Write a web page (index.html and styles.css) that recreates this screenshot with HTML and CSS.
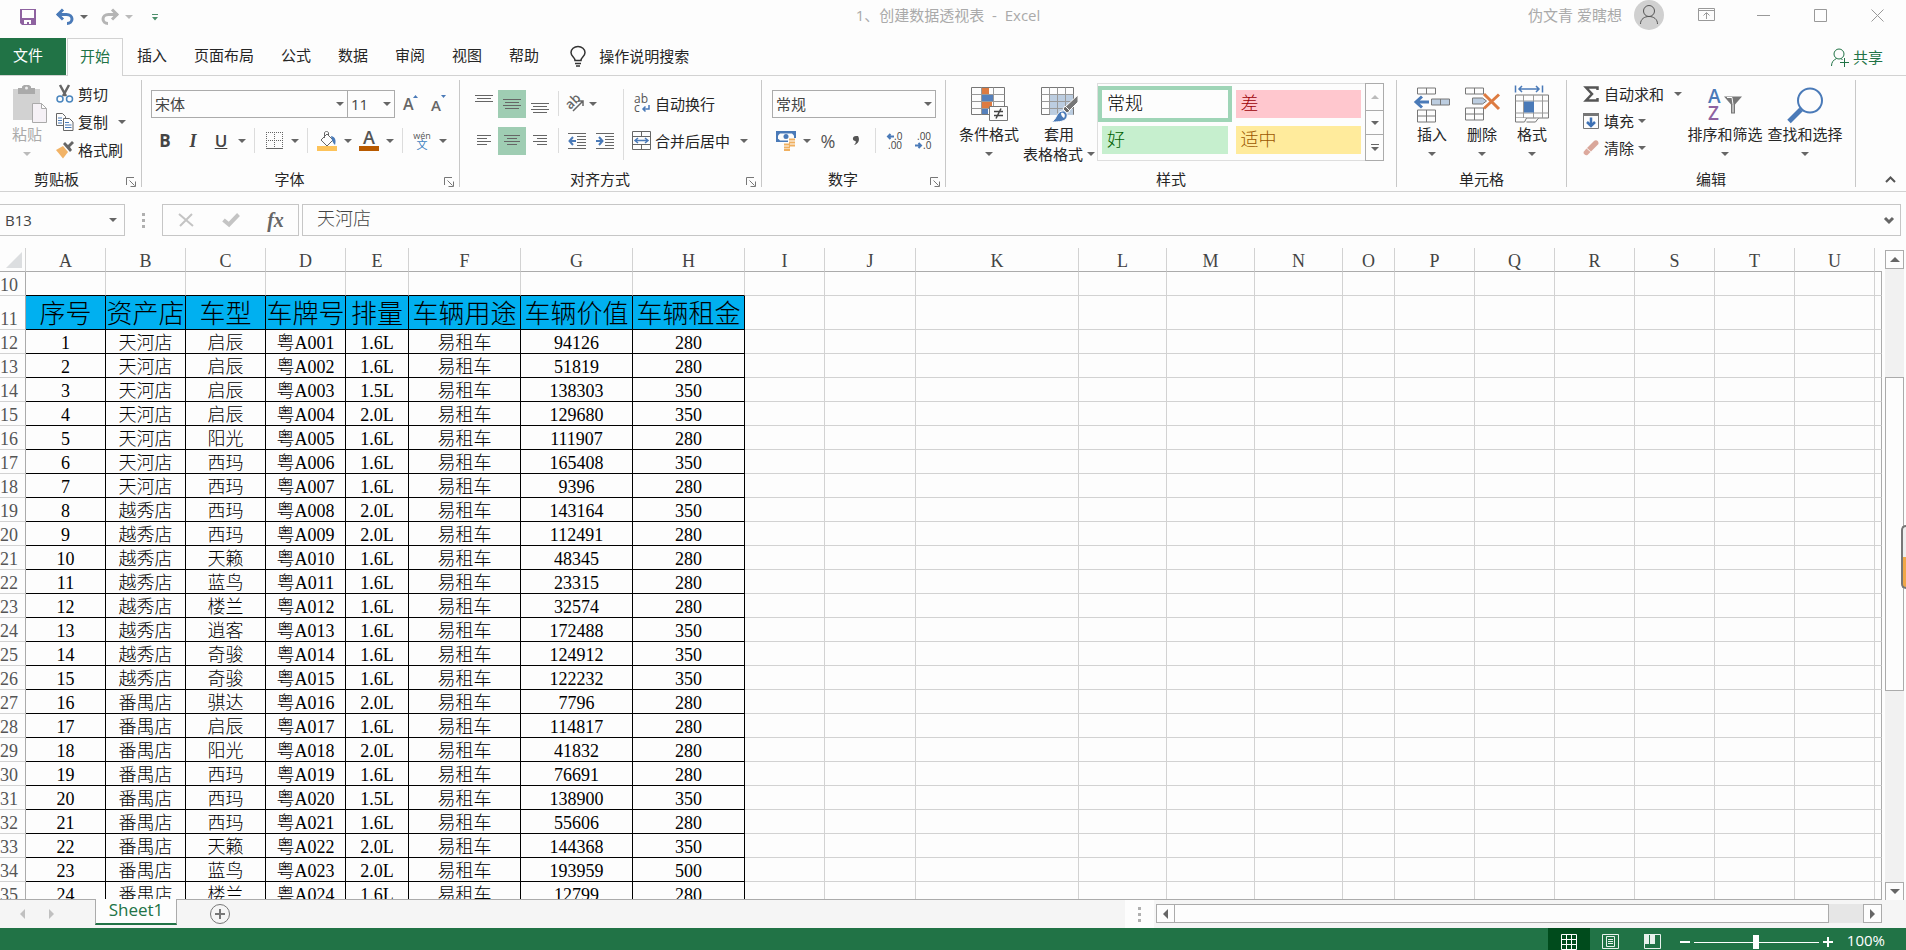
FILE: index.html
```
<!DOCTYPE html>
<html lang="zh-CN">
  <head>
    <meta charset="utf-8">
    <meta name="viewport" content="width=device-width, initial-scale=1">
    <title>1、创建数据透视表 - Excel</title>
    <link rel="stylesheet" href="styles.css">
  </head>
  <body>
    <header class="titlebar">
      <div class="quick">
        <button class="save" aria-label="保存"><svg width="16" height="16" viewBox="0 0 16 16"><path d="M0 0h16v16H2l-2-2z" fill="#8e62a0"/><path d="M2 1h12v8H2z" fill="#fdfdfd"/><path d="M4 11h7v4H9v-2H7v2H4z" fill="#fdfdfd"/></svg></button>
        <button class="undo" aria-label="撤消"><svg width="18" height="16" viewBox="0 0 18 16" fill="none" stroke="#4a7ab8" stroke-width="3"><path d="M1 5.500h9.500c3.500 0 5.500 2 5.500 4.500s-2 4.500-5 4.500" /><path d="M7 0.500l-5 5 5 5"/></svg></button>
        <button class="drop" aria-label="撤消列表"><span class="caret"></span></button>
        <button class="undo" aria-label="恢复"><svg width="18" height="16" viewBox="0 0 18 16" fill="none" stroke="#b5b5b5" stroke-width="3"><path d="M17 5.500H7.500C4 5.500 2 7.500 2 10s2 4.500 5 4.500"/><path d="M11 0.500l5 5-5 5"/></svg></button>
        <button class="drop" aria-label="恢复列表"><span class="caret pale"></span></button>
        <button class="custom" aria-label="自定义快速访问工具栏"><svg width="6" height="7" viewBox="0 0 6 7" fill="#4d8f6c"><path d="M0 0h6v1H0zM0 3h6L3 6.500z"/></svg></button>
      </div>
      <h1>1、创建数据透视表&nbsp; -&nbsp; Excel</h1>
      <div class="account">
        <span>伪文青 爱瞎想</span>
        <button class="avatar" aria-label="帐户"><svg width="30" height="30" viewBox="0 0 30 30" fill="none" stroke="#555"><circle cx="15" cy="15" r="15" fill="#d0d0d0" stroke="none"/><circle cx="15" cy="11" r="5.500"/><path d="M6.500 24c0-5 4-7.500 8.500-7.500s8.500 2.500 8.500 7.500"/></svg></button>
        <button class="win" aria-label="功能区显示选项"><svg width="17" height="14" viewBox="0 0 17 14" fill="none" stroke="#999"><path d="M.5.500h16v12H.5zM.5 2.500h16M8.500 11V5M5.500 7.500l3-3 3 3"/></svg></button>
        <button class="win" aria-label="最小化"><svg width="13" height="13" viewBox="0 0 13 13" stroke="#999"><path d="M0 6.500h13"/></svg></button>
        <button class="win" aria-label="最大化"><svg width="13" height="13" viewBox="0 0 13 13" fill="none" stroke="#999"><path d="M.5.500h12v12H.5z"/></svg></button>
        <button class="win" aria-label="关闭"><svg width="13" height="13" viewBox="0 0 13 13" stroke="#999"><path d="M.5.500l12 12M12.500.500l-12 12"/></svg></button>
      </div>
    </header>

    <nav class="tabs">
      <button class="file">文件</button>
      <button class="active">开始</button>
      <button>插入</button>
      <button>页面布局</button>
      <button>公式</button>
      <button>数据</button>
      <button>审阅</button>
      <button>视图</button>
      <button>帮助</button>
      <button class="tell"><svg width="16" height="21" viewBox="0 0 16 21" fill="none" stroke="#333" stroke-width="1.500"><path d="M5 14.500c0-3-4-4-4-8a7 6 0 0 1 14 0c0 4-4 5-4 8zM5 17.500h6M6 20h4"/></svg>操作说明搜索</button>
      <button class="share"><svg width="18" height="19" viewBox="0 0 18 19" fill="none" stroke="#217346"><circle cx="8" cy="6" r="5"/><path d="M.5 18c0-4 2-6 5-7.500M10 10.500l1.500 1.500M13.500 10v9M9 14.500h9"/></svg>共享</button>
    </nav>

    <section class="ribbon">
      <div class="group clipboard">
        <div class="tools">
          <button class="big paste"><svg width="34" height="39" viewBox="0 0 34 39"><path d="M0 4h27v31H0z" fill="#d2d2d2"/><path d="M5 3h4V1.500L11 0h5l2 1.500V3h4v6H5z" fill="#aaa"/><circle cx="13.500" cy="3" r="1.500" fill="#eee"/><path d="M19.500 18.500h9l5 5v14h-14zM28.500 18.500v5h5" fill="#f5f1f6" stroke="#aaa"/></svg>粘贴<span class="caret pale"></span></button>
          <div class="stack">
            <button><svg width="18" height="18" viewBox="0 0 18 18" fill="none"><path d="M4 0l6 11M13 0L7 11" stroke="#666" stroke-width="2.500"/><circle cx="4" cy="14" r="3" stroke="#4a86be" stroke-width="1.500"/><circle cx="13.500" cy="14" r="3" stroke="#4a86be" stroke-width="1.500"/></svg>剪切</button>
            <button><svg width="18" height="18" viewBox="0 0 18 18" fill="#fdfdfd" stroke="#666"><path d="M.5.500h6l3 3v9h-9z"/><path d="M2 5h4M2 7.500h4M2 10h4" stroke="#4a7ab8"/><path d="M7.500 5.500h6l3.500 3.500v8.500H7.500z"/><path d="M9 9.500h4M9 12h6.500M9 14.500h6.500" stroke="#4a7ab8"/></svg>复制<span class="caret far"></span></button>
            <button><svg width="18" height="18" viewBox="0 0 18 18"><path d="M0 9l7-4 5 6-5 6.500z" fill="#f2b366"/><path d="M7 3l2-2 3 3 4-4 2 2-4 4 2 3-2 2z" fill="#666"/></svg>格式刷</button>
          </div>
        </div>
        <footer><span>剪贴板</span><button class="launch" aria-label="剪贴板设置"><svg width="10" height="10" viewBox="0 0 10 10" fill="none" stroke="#777"><path d="M.5 8V.500H8M3.500 3.500l5 5M9.500 4.500v5h-5"/></svg></button></footer>
      </div>

      <div class="group font">
        <div class="tools">
          <div class="rows">
            <div class="row">
              <label class="combo face"><select aria-label="字体"><option>宋体</option></select><span class="caret"></span></label>
              <label class="combo size"><select aria-label="字号"><option>11</option></select><span class="caret"></span></label>
              <button class="tool" aria-label="增大字号"><svg width="16" height="20" viewBox="0 0 16 20"><text x="0" y="16" font-size="16" font-weight="600" fill="#666">A</text><path d="M10 4l2.500-3L15 4z" fill="#4a7ab8"/></svg></button>
              <button class="tool" aria-label="减小字号"><svg width="16" height="20" viewBox="0 0 16 20"><text x="0" y="17" font-size="15" font-weight="600" fill="#666">A</text><path d="M10 1l2.500 3L15 1z" fill="#4a7ab8"/></svg></button>
            </div>
            <div class="row">
              <button class="tool letter"><b>B</b></button>
              <button class="tool letter"><i>I</i></button>
              <button class="tool letter"><u>U</u></button>
              <button class="drop" aria-label="下划线类型"><span class="caret"></span></button>
              <span class="sep"></span>
              <button class="tool" aria-label="边框"><svg width="17" height="17" viewBox="0 0 17 17" fill="none" stroke="#666"><path d="M0 .500h17M.5 0v16M8.500 0v16M16.500 0v16M0 8.500h17" stroke-dasharray="1 1"/><path d="M0 16.500h17"/></svg></button>
              <button class="drop" aria-label="边框类型"><span class="caret"></span></button>
              <span class="sep"></span>
              <button class="tool" aria-label="填充颜色"><svg width="20" height="20" viewBox="0 0 20 20"><path d="M4 9l6-6 6 6-6 6z" fill="#fdfdfd" stroke="#666"/><path d="M7.500 7V2c0-2 4-2 4 0v3" fill="none" stroke="#666"/><path d="M14 5c5 1 5 5 4 9-2-2-3-4-4-9z" fill="#4a7ab8"/><path d="M0 15h20v5H0z" fill="#fdc35a"/></svg></button>
              <button class="drop" aria-label="选择填充颜色"><span class="caret"></span></button>
              <button class="tool" aria-label="字体颜色"><svg width="20" height="20" viewBox="0 0 20 20"><text x="10" y="13" text-anchor="middle" font-size="18" font-weight="600" fill="#555">A</text><path d="M0 15h20v5H0z" fill="#b85a00"/></svg></button>
              <button class="drop" aria-label="选择字体颜色"><span class="caret"></span></button>
              <span class="sep"></span>
              <button class="tool" aria-label="拼音"><svg width="18" height="20" viewBox="0 0 18 20"><text x="9" y="8" text-anchor="middle" font-size="9" fill="#555">wén</text><text x="9" y="18" text-anchor="middle" font-size="11" fill="#3a7fc0">文</text></svg></button>
              <button class="drop" aria-label="拼音选项"><span class="caret"></span></button>
            </div>
          </div>
        </div>
        <footer><span>字体</span><button class="launch" aria-label="字体设置"><svg width="10" height="10" viewBox="0 0 10 10" fill="none" stroke="#777"><path d="M.5 8V.500H8M3.500 3.500l5 5M9.500 4.500v5h-5"/></svg></button></footer>
      </div>

      <div class="group align">
        <div class="tools">
          <div class="rows">
            <div class="row">
              <button class="tool" aria-label="顶端对齐"><svg width="18" height="20" viewBox="0 0 18 20" stroke="#666"><path d="M0 1.500h18M2 4.500h14M0 7.500h18"/></svg></button>
              <button class="tool on" aria-label="垂直居中"><svg width="18" height="20" viewBox="0 0 18 20" stroke="#666"><path d="M0 5.500h18M2 8.500h14M0 11.500h18M2 14.500h14"/></svg></button>
              <button class="tool" aria-label="底端对齐"><svg width="18" height="20" viewBox="0 0 18 20" stroke="#666"><path d="M0 9.500h18M2 12.500h14M0 15.500h18M2 18.500h14"/></svg></button>
              <span class="sep"></span>
              <button class="tool turn" aria-label="方向"><svg width="20" height="20" viewBox="0 0 20 20"><text x="2" y="14" font-size="13" font-weight="600" fill="#666" transform="rotate(-45 6 11)">ab</text><path d="M8 17L18 7M13 7h5v5" fill="none" stroke="#666" stroke-width="1.500"/></svg><span class="caret"></span></button>
            </div>
            <div class="row">
              <button class="tool" aria-label="左对齐"><svg width="14" height="14" viewBox="0 0 14 14" stroke="#666"><path d="M0 1.500h14M0 4.500h10M0 7.500h14M0 10.500h10"/></svg></button>
              <button class="tool on" aria-label="居中"><svg width="16" height="14" viewBox="0 0 16 14" stroke="#666"><path d="M0 1.500h16M3 4.500h10M0 7.500h16M3 10.500h10"/></svg></button>
              <button class="tool" aria-label="右对齐"><svg width="14" height="14" viewBox="0 0 14 14" stroke="#666"><path d="M0 1.500h14M4 4.500h10M0 7.500h14M4 10.500h10"/></svg></button>
              <span class="sep"></span>
              <button class="tool" aria-label="减少缩进量"><svg width="18" height="16" viewBox="0 0 18 16" fill="none" stroke="#666"><path d="M0 .500h18M9 3.500h9M9 6.500h9M9 9.500h9M9 12.500h9M0 15.500h18"/><path d="M5 4L1.500 8 5 12M1 8h7" stroke="#4a7ab8" stroke-width="2"/></svg></button>
              <button class="tool" aria-label="增加缩进量"><svg width="18" height="16" viewBox="0 0 18 16" fill="none" stroke="#666"><path d="M0 .500h18M9 3.500h9M9 6.500h9M9 9.500h9M9 12.500h9M0 15.500h18"/><path d="M3 4l3.500 4L3 12M0 8h7" stroke="#4a7ab8" stroke-width="2"/></svg></button>
            </div>
          </div>
          <span class="sep tall"></span>
          <div class="rows">
            <div class="row">
              <button class="wide"><svg width="20" height="20" viewBox="0 0 20 20"><text x="2" y="9" font-size="12" fill="#555">ab</text><text x="2" y="18" font-size="12" fill="#555">c</text><path d="M17 11v4h-6M13.500 12.500L11 15l2.500 2.500" fill="none" stroke="#4a7ab8" stroke-width="1.500"/></svg>自动换行</button>
            </div>
            <div class="row">
              <button class="wide"><svg width="20" height="20" viewBox="0 0 20 20" fill="none" stroke="#666"><path d="M.5.500h18v18H.5zM.5 5.500h18M.5 13.500h18M9.500.500v5M9.500 13.500v5"/><path d="M3 9.500h13M6 7L3 9.500 6 12M13 7l3 2.500-3 2.500" stroke="#4a7ab8" stroke-width="1.500"/></svg>合并后居中<span class="caret far"></span></button>
            </div>
          </div>
        </div>
        <footer><span>对齐方式</span><button class="launch" aria-label="对齐设置"><svg width="10" height="10" viewBox="0 0 10 10" fill="none" stroke="#777"><path d="M.5 8V.500H8M3.500 3.500l5 5M9.500 4.500v5h-5"/></svg></button></footer>
      </div>

      <div class="group number">
        <div class="tools">
          <div class="rows">
            <div class="row">
              <label class="combo format"><select aria-label="数字格式"><option>常规</option></select><span class="caret"></span></label>
            </div>
            <div class="row">
              <button class="tool" aria-label="会计数字格式"><svg width="20" height="20" viewBox="0 0 20 20"><path d="M0 0h20v11H0z" fill="#4a7ab8"/><path d="M4 2.500h12l2 2v3l-2 2H4l-2-2v-3z" fill="#fdfdfd"/><circle cx="10" cy="5.500" r="2.500" fill="#4a7ab8"/><path d="M12 7h8v11h-5v2H7v-7h5z" fill="#fdfdfd"/><path d="M13 8.500h6M13 11.500h6M13 14.500h6M8 13.500h6M8 16.500h6M8 19h6" stroke="#f0b060" stroke-width="2"/></svg></button>
              <button class="drop" aria-label="会计格式列表"><span class="caret"></span></button>
              <button class="tool percent">%</button>
              <button class="tool comma" aria-label="千位分隔样式"><svg width="8" height="10" viewBox="0 0 8 10" fill="#555"><path d="M6 0c2 3 1 8-4 9 2-2 2-3 1.500-4C0 5 0 0 4 0z"/></svg></button>
              <span class="sep"></span>
              <button class="tool" aria-label="增加小数位数"><svg width="18" height="18" viewBox="0 0 18 18"><text x="8" y="8" font-size="10" fill="#444">.0</text><text x="2" y="17" font-size="10" fill="#444">.00</text><path d="M8 4.500H2M4.500 2L2 4.500 4.500 7" fill="none" stroke="#4a7ab8" stroke-width="2"/></svg></button>
              <button class="tool" aria-label="减少小数位数"><svg width="18" height="18" viewBox="0 0 18 18"><text x="3" y="8" font-size="10" fill="#444">.00</text><text x="9" y="17" font-size="10" fill="#444">.0</text><path d="M1 13.500h6M4.500 11L7 13.500 4.500 16" fill="none" stroke="#4a7ab8" stroke-width="2"/></svg></button>
            </div>
          </div>
        </div>
        <footer><span>数字</span><button class="launch" aria-label="数字设置"><svg width="10" height="10" viewBox="0 0 10 10" fill="none" stroke="#777"><path d="M.5 8V.500H8M3.500 3.500l5 5M9.500 4.500v5h-5"/></svg></button></footer>
      </div>

      <div class="group styles">
        <div class="tools">
          <button class="big cond"><svg width="37" height="35" viewBox="0 0 37 35" fill="none" stroke="#777"><path d="M.5.500h33v27H.5z" fill="#fdfdfd"/><path d="M.5 7.500h33M.5 14.500h33M.5 21.500h33M10.500.500v27M22.500.500v27" stroke="#999"/><path d="M11 1h7v6h-7zM11 15h10v6H11z" fill="#dd7b41" stroke="none"/><path d="M11 8h11v6H11zM11 22h6v5h-6z" fill="#5580bb" stroke="none"/><path d="M18.500 19.500h18v14h-18z" fill="#fdfdfd"/><path d="M23 24.500h9M23 28.500h9M30 21.500l-5 10" stroke="#444" stroke-width="1.500"/></svg>条件格式<span class="caret"></span></button>
          <button class="big table"><svg width="37" height="35" viewBox="0 0 37 35" fill="none" stroke="#777"><path d="M.5.500h32v27H.5z" fill="#fdfdfd"/><path d="M9 8h23v20H9z" fill="#bccde0" stroke="none"/><path d="M.5 7.500h32M.5 14.500h32M.5 21.500h32M8.500.500v27M16.500.500v27M24.500.500v27" stroke="#999"/><path d="M37 8v7l-9 9-4-4z" fill="#777" stroke="#fdfdfd"/><path d="M24 19l5 5-3 2-4-4z" fill="#666" stroke="#fdfdfd"/><path d="M10 35c6-2 5-10 11-11 4-1 7 4 4 8-3 3-9 3-15 3z" fill="#4a7ab8" stroke="#fdfdfd"/><path d="M20 26c3-1 5 2 3 5-2-1-3-3-3-5z" fill="#fdfdfd" stroke="none"/></svg>套用<span class="second">表格格式<span class="caret"></span></span></button>
          <div class="gallery">
            <div class="swatches">
              <button class="normal">常规</button>
              <button class="bad">差</button>
              <button class="good">好</button>
              <button class="neutral">适中</button>
            </div>
            <div class="pager">
              <button aria-label="上一行"><span class="caret up pale"></span></button>
              <button aria-label="下一行"><span class="caret"></span></button>
              <button class="more" aria-label="其他"><span class="caret"></span></button>
            </div>
          </div>
        </div>
        <footer><span>样式</span></footer>
      </div>

      <div class="group cells">
        <div class="tools">
          <button class="big"><svg width="36" height="36" viewBox="0 0 36 36" fill="#fdfdfd" stroke="#777"><path d="M3.500 1.500h18v6h-18zM12.500 1.500v6M3.500 23.500h18v12h-18zM3.500 29.500h18M12.500 23.500v12"/><path d="M17.500 12.500h18v6h-18zM26.500 12.500v6" fill="#bccde0"/><path d="M15 15.500H3M8 10l-6 5.500L8 21" fill="none" stroke="#4a7ab8" stroke-width="3"/></svg>插入<span class="caret"></span></button>
          <button class="big"><svg width="36" height="36" viewBox="0 0 36 36" fill="#fdfdfd" stroke="#777"><path d="M1.500 1.500h18v6h-18zM10.500 1.500v6M1.500 21.500h18v12h-18zM1.500 27.500h18M10.500 21.500v12"/><path d="M8.500 11.500h10l4 3-4 3h-10z" fill="#bccde0"/><path d="M20 7.500l15 15M35 8L20 22" fill="none" stroke="#dd7b41" stroke-width="3"/></svg>删除<span class="caret"></span></button>
          <button class="big"><svg width="34" height="38" viewBox="0 0 34 38" fill="#fdfdfd" stroke="#777"><path d="M.5 9.500h33v23h-33z"/><path d="M.5 15.500h33M.5 27.500h33M8.500 9.500v23M18.500 9.500v23M27.500 9.500v23" stroke="#999"/><path d="M9 16h10v11H9z" fill="#4a7ab8" stroke="none"/><path d="M.5 32.500v4h9l2-4M11.500 36.500h9l3-4"/><path d="M.5 0v7M27.500 0v7M4 3.500h20M7 .500L4 3.500l3 3M21 .500l3 3-3 3" fill="none" stroke="#4a7ab8" stroke-width="1.500"/></svg>格式<span class="caret"></span></button>
        </div>
        <footer><span>单元格</span></footer>
      </div>

      <div class="group editing">
        <div class="tools">
          <div class="stack">
            <button><svg width="18" height="18" viewBox="0 0 18 18" fill="none" stroke="#555" stroke-width="2.500"><path d="M15.500 5V2.500H4L10 9l-6 6.500h11.500V13"/></svg>自动求和<span class="caret far"></span></button>
            <button><svg width="18" height="18" viewBox="0 0 18 18" fill="none" stroke="#777"><path d="M1.500 1.500h15v15h-15z"/><path d="M1 2.500h16" stroke-width="3"/><path d="M9 5.500v8M5 10l4 4 4-4" stroke="#3f72b5" stroke-width="2.500"/></svg>填充<span class="caret"></span></button>
            <button><svg width="18" height="18" viewBox="0 0 18 18"><path d="M12 2c2-2 5 0 4.500 3L9 12.500 5 9z" fill="#d9a79a"/><path d="M4.500 9.500l4 3.500-3 3c-2 1-4-1-4-3z" fill="#dda99d"/></svg>清除<span class="caret"></span></button>
          </div>
          <button class="big search"><svg width="34" height="34" viewBox="0 0 34 34"><text x="0" y="15" font-size="19" font-weight="600" fill="#4a7ab8">A</text><text x="0" y="32" font-size="19" font-weight="600" fill="#8e62a0">Z</text><path d="M16 9h18l-7 8v9h-4v-9z" fill="#777"/><path d="M19 10h5l1 7v8" fill="none" stroke="#fdfdfd"/></svg>排序和筛选<span class="caret"></span></button>
          <button class="big search"><svg width="36" height="36" viewBox="0 0 36 36" fill="none" stroke="#4a7ab8"><circle cx="23" cy="14" r="12" stroke-width="2"/><path d="M14 23L2 35" stroke-width="5"/></svg>查找和选择<span class="caret"></span></button>
        </div>
        <footer><span>编辑</span></footer>
      </div>
      <button class="collapse" aria-label="折叠功能区"><svg width="11" height="7" viewBox="0 0 11 7" fill="none" stroke="#555" stroke-width="2"><path d="M1 6l4.500-4.500L10 6"/></svg></button>
    </section>

    <section class="formula">
      <div class="namebox"><input aria-label="名称框" value="B13"><button aria-label="名称列表"><span class="caret"></span></button></div>
      <span class="dots"><i></i><i></i><i></i></span>
      <div class="actions">
        <button aria-label="取消"><svg width="16" height="14" viewBox="0 0 16 14" stroke="#c4c4c4" stroke-width="2"><path d="M1 1l14 12M14 1L2 13"/></svg></button>
        <button aria-label="输入"><svg width="18" height="14" viewBox="0 0 18 14" fill="none" stroke="#c4c4c4" stroke-width="4"><path d="M1.500 7L7 11.500 16.500 1.500"/></svg></button>
        <button class="fx"><i>fx</i></button>
      </div>
      <div class="content"><input aria-label="编辑栏" value="天河店"><button aria-label="展开编辑栏"><svg width="10" height="7" viewBox="0 0 10 7" fill="none" stroke="#666" stroke-width="3"><path d="M1 1l4 4 4-4"/></svg></button></div>
    </section>

    <main class="workspace">
      <div class="sheet">
        <table>
          <colgroup>
            <col class="w-head"><col class="w-80" span="4"><col class="w-63"><col class="w-112" span="3"><col class="w-80"><col class="w-91"><col class="w-163"><col class="w-88" span="3"><col class="w-52"><col class="w-80" span="6"><col>
          </colgroup>
          <thead></thead>
          <tbody></tbody>
        </table>
      </div>
      <div class="vscroll">
        <button aria-label="向上滚动"><svg width="10" height="5"><path d="M0 5l5-5 5 5z" fill="#666"/></svg></button>
        <div class="before"></div>
        <div class="thumb"></div>
        <div class="after"></div>
        <button aria-label="向下滚动"><svg width="10" height="5"><path d="M0 0l5 5 5-5z" fill="#666"/></svg></button>
      </div>
    </main>

    <div class="sheetbar">
      <button class="prev" aria-label="上一张工作表"><svg width="5" height="10"><path d="M5 0v10L0 5z" fill="#c0c0c0"/></svg></button>
      <button class="next" aria-label="下一张工作表"><svg width="5" height="10"><path d="M0 0v10l5-5z" fill="#c0c0c0"/></svg></button>
      <button class="sheet-tab">Sheet1</button>
      <button class="add" aria-label="新工作表"><svg width="20" height="20" viewBox="0 0 20 20" fill="none" stroke="#777"><circle cx="10" cy="10" r="9.500"/><path d="M5 10h10M10 5v10" stroke-width="2"/></svg></button>
      <div class="free"></div>
      <span class="dots"><i></i><i></i><i></i></span>
      <div class="hscroll">
        <button aria-label="向左滚动"><svg width="5" height="10"><path d="M5 0v10L0 5z" fill="#666"/></svg></button>
        <div class="thumb"></div>
        <div class="after"></div>
        <button aria-label="向右滚动"><svg width="5" height="10"><path d="M0 0v10l5-5z" fill="#666"/></svg></button>
      </div>
    </div>

    <footer class="status">
      <button class="view on" aria-label="普通"><svg width="16" height="16" viewBox="0 0 16 16" fill="none" stroke="#fff"><path d="M.5.500h15v15H.5zM5.500 0v16M10.500 0v16M0 5.500h16M0 10.500h16"/></svg></button>
      <button class="view" aria-label="页面布局"><svg width="17" height="16" viewBox="0 0 17 16" fill="none" stroke="#e8f1ec"><path d="M.5.500h16v14H.5zM4.500 2.500h8v10h-8zM6 5.500h5M6 7.500h5M6 9.500h5"/></svg></button>
      <button class="view" aria-label="分页预览"><svg width="17" height="16" viewBox="0 0 17 16"><path d="M.5.500h16v14H.5z" fill="none" stroke="#e8f1ec"/><path d="M0 0h5v10H0zM6 0h5v10H6z" fill="#e8f1ec"/></svg></button>
      <button class="zoom out" aria-label="缩小"><svg width="10" height="10"><path d="M0 4h10v2H0z" fill="#fff"/></svg></button>
      <input type="range" min="0" max="100" value="50" aria-label="显示比例">
      <button class="zoom" aria-label="放大"><svg width="10" height="10"><path d="M0 4h4V0h2v4h4v2H6v4H4V6H0z" fill="#fff"/></svg></button>
      <span class="percentage">100%</span>
    </footer>
    <div class="dock"></div>
    <script src="app.js"></script>
  </body>
</html>
```
FILE: styles.css
```
* {
  box-sizing: border-box;
}

body {
  margin: 0;
  height: 100vh;
  display: flex;
  flex-direction: column;
  overflow: hidden;
  background: #fdfdfd;
  color: #262626;
  font-family: "Open Sans", "Noto Sans CJK SC", sans-serif;
  font-size: 15px;
  line-height: 20px;
}

button, input, select {
  margin: 0;
  padding: 0;
  border: 0;
  background: none;
  color: inherit;
  font: inherit;
}

button {
  display: flex;
  align-items: center;
  justify-content: center;
  white-space: nowrap;
}

svg {
  display: block;
  flex: none;
  overflow: visible;
}

.caret {
  border: 4px solid transparent;
  border-top-color: #666;
  border-bottom: 0;
}

.caret.pale {
  border-top-color: #bbb;
}

.caret.up {
  border-top: 0;
  border-bottom: 4px solid #bbb;
}

/* title bar */
.titlebar {
  display: grid;
  grid-template-columns: 1fr auto 1fr;
  height: 38px;
  padding-bottom: 12px;
  align-items: center;
  color: #aaa;
}

.titlebar h1 {
  margin: 0;
  padding-right: 10px;
  font-size: 15px;
  font-weight: 400;
}

.quick, .account {
  display: flex;
  align-items: center;
}

.quick {
  padding: 4px 0 0 14px;
}

.account {
  justify-content: flex-end;
}

.save {
  width: 28px;
}

.undo {
  width: 18px;
  margin-left: 14px;
}

.drop {
  width: 14px;
  height: 28px;
}

.quick .drop {
  width: 18px;
  height: 16px;
  margin-left: 1px;
}

.quick .drop + .undo {
  margin-left: 8px;
}

.custom {
  width: 6px;
  margin-left: 14px;
}

.avatar {
  margin: 0 14px 0 12px;
}

.win {
  width: 57px;
}

/* tabs */
.tabs {
  display: flex;
  gap: 1px;
  height: 38px;
  border-bottom: 1px solid #d2d2d2;
}

.tabs button {
  padding: 0 12px 4px;
  border: 1px solid transparent;
  border-bottom: 0;
}

.tabs .file {
  justify-content: flex-start;
  width: 66px;
  background: #217346;
  color: #fff;
}

.tabs .active {
  margin-bottom: -1px;
  border-color: #d2d2d2;
  background: #fdfdfd;
  color: #217346;
}

.tabs .tell {
  margin-left: 4px;
  padding-bottom: 2px;
  gap: 13px;
}

.tabs .share {
  margin-left: auto;
  padding: 0 22px 0 0;
  gap: 4px;
  color: #217346;
}

/* ribbon */
.ribbon {
  display: flex;
  height: 116px;
  border-bottom: 1px solid #d2d2d2;
}

.group {
  display: flex;
  flex-direction: column;
  flex: none;
  border-right: 1px solid #c8c8c8;
  margin: 4px 0;
}

.clipboard {
  width: 142px;
}

.font {
  width: 318px;
  padding-left: 9px;
}

.align {
  width: 302px;
  padding-left: 10px;
}

.number {
  width: 184px;
  padding-left: 10px;
}

.styles {
  width: 451px;
}

.cells {
  width: 170px;
}

.editing {
  width: 289px;
}

.tools {
  display: flex;
  flex: 1;
  align-items: flex-start;
}

.styles .tools {
  padding-left: 9px;
}

.cells .tools {
  padding-left: 10px;
}

.group footer {
  display: flex;
  height: 20px;
  margin-bottom: -2px;
}

.font footer, .align footer, .number footer {
  margin-left: -9px;
}

.group footer span {
  flex: 1;
  text-align: center;
}

.launch {
  width: 20px;
  margin-left: 2px;
  padding: 5px 0 0;
}

.clipboard .launch {
  margin-left: 8px;
}

.big {
  flex-direction: column;
  justify-content: flex-start;
  width: 50px;
  padding-top: 1px;
}

.big svg {
  height: 43px;
  padding-top: 4px;
}

.big > .caret {
  margin-top: 8px;
}

.paste {
  width: 54px;
  color: #aaa;
}

.paste svg {
  margin-left: 6px;
}

.cond {
  width: 68px;
}

.table {
  width: 72px;
  margin-right: 2px;
}

.second {
  display: flex;
  align-items: center;
  gap: 4px;
}

.search {
  width: 80px;
}

.stack button {
  justify-content: flex-start;
  height: 28px;
  gap: 4px;
}

.clipboard .stack {
  padding-left: 2px;
}

.stack .far {
  margin-left: 6px;
}

.editing .stack {
  width: 118px;
  padding-left: 15px;
}

.editing .stack button {
  height: 27px;
}

.rows {
  padding-top: 5px;
}

.row {
  display: flex;
  align-items: center;
  height: 37px;
}

.tool {
  width: 28px;
  height: 28px;
}

.on {
  background: #9fcdb3;
}

.turn {
  width: 36px;
  gap: 4px;
}

.letter {
  color: #444;
  font-size: 17px;
}

.letter b {
  font-weight: 700;
}

.letter i {
  font-family: "Liberation Serif", serif;
  font-weight: 700;
  font-size: 18px;
}

.letter u {
  font-weight: 600;
}

.percent {
  color: #555;
  font-size: 18px;
}

.sep {
  width: 1px;
  height: 25px;
  margin: 0 5px;
  background: #dcdcdc;
}

.align .sep {
  margin: 0 4px;
}

.sep.tall {
  height: 71px;
  align-self: center;
}

.wide {
  height: 28px;
  padding-left: 4px;
  gap: 3px;
}

.wide .far {
  margin-left: 7px;
}

.combo {
  display: grid;
  height: 28px;
  border: 1px solid #ababab;
  color: #444;
}

.combo select, .combo .caret {
  grid-area: 1 / 1;
}

.combo select {
  appearance: none;
  padding: 0 3px;
  outline: 0;
}

.combo .caret {
  place-self: center end;
  margin-right: 3px;
  pointer-events: none;
}

.face {
  width: 197px;
}

.size {
  width: 48px;
  margin: 0 2px 0 -1px;
}

.format {
  width: 164px;
}

.gallery {
  display: flex;
  width: 287px;
  height: 78px;
  margin-top: 3px;
  border: 1px solid #dedede;
  border-right: 0;
}

.swatches {
  display: grid;
  flex: 1;
  grid-template-columns: 1fr 1fr;
  grid-template-rows: 36px 36px;
  padding-top: 2px;
}

.swatches button {
  justify-content: flex-start;
  padding: 0 0 2px 5px;
  border: 4px solid transparent;
  background-clip: padding-box;
  font-size: 18px;
  font-weight: 300;
}

.swatches .normal {
  border-color: #9fd5b7;
  color: #000;
}

.bad {
  background-color: #ffc7ce;
  color: #9c0006;
}

.good {
  background-color: #c6efce;
  color: #006100;
}

.neutral {
  background-color: #ffeb9c;
  color: #9c5700;
}

.pager {
  display: grid;
  width: 19px;
  margin: -1px 0;
  grid-template-rows: 26px 24px 1fr;
  border: 1px solid #ababab;
}

.pager button + button {
  border-top: 1px solid #ababab;
}

.pager .more {
  flex-direction: column;
  gap: 2px;
}

.more::before {
  content: "";
  width: 8px;
  height: 1px;
  background: #666;
}

.collapse {
  align-self: flex-end;
  width: 24px;
  height: 24px;
  margin-left: auto;
  margin-right: 4px;
}

/* formula bar */
.formula {
  display: flex;
  height: 56px;
  padding: 12px 5px 12px 0;
}

.namebox, .actions, .content {
  display: flex;
  border: 1px solid #c6c6c6;
}

.namebox {
  width: 125px;
  border-left: 0;
}

.namebox input {
  flex: 1;
  min-width: 0;
  padding-left: 5px;
  color: #444;
}

.namebox button {
  width: 22px;
}

.dots {
  display: flex;
  flex-direction: column;
  align-items: center;
  justify-content: center;
  gap: 3px;
  width: 37px;
}

.dots i {
  width: 3px;
  height: 3px;
  background: #b0b0b0;
}

.actions {
  width: 137px;
}

.actions button {
  flex: 1;
}

.fx {
  font-family: "Liberation Serif", serif;
  font-size: 20px;
  font-weight: 700;
}

.actions .fx {
  color: #666;
}

.content {
  flex: 1;
  margin-left: 3px;
}

.content input {
  flex: 1;
  padding: 0 0 5px 14px;
  color: #444;
  font-size: 18px;
  font-weight: 300;
}

.content button {
  width: 22px;
}

/* sheet */
.workspace {
  display: flex;
  flex: 1;
  min-height: 0;
  padding-right: 2px;
}

.sheet {
  flex: 1;
  min-width: 0;
  overflow: hidden;
  border-bottom: 1px solid #ababab;
}

table {
  width: 100%;
  table-layout: fixed;
  border-spacing: 0;
  font-family: "Liberation Serif", "Noto Sans CJK SC", serif;
  font-size: 18px;
  font-weight: 300;
  line-height: 20px;
  text-align: center;
}

.w-head {
  width: 26px;
}

.w-80 {
  width: 80px;
}

.w-63 {
  width: 63px;
}

.w-112 {
  width: 112px;
}

.w-91 {
  width: 91px;
}

.w-163 {
  width: 163px;
}

.w-88 {
  width: 88px;
}

.w-52 {
  width: 52px;
}

th, td {
  height: 24px;
  padding: 3px 0 0;
  border-right: 1px solid #d2d2d2;
  border-bottom: 1px solid #d2d2d2;
  font-weight: 300;
  vertical-align: bottom;
  white-space: nowrap;
}

thead th {
  border-bottom-color: #ababab;
  color: #444;
}

thead th:last-child {
  border-right: 0;
}

thead svg {
  margin: 0 0 3px 6px;
}

tbody th {
  padding-right: 7px;
  border-right-color: #ababab;
  color: #555;
}

tbody td:last-child {
  border-right-color: #ababab;
}

.title th, .title td {
  height: 34px;
}

.title .data {
  background: #00b0f0;
  font-size: 26px;
  line-height: 28px;
}

.data {
  border-color: #000;
  color: #000;
}

.above {
  border-bottom-color: #000;
}

.vscroll {
  display: flex;
  flex-direction: column;
  width: 19px;
  margin: 2px 0 -1px 3px;
  background: #f1f1f1;
}

.vscroll button, .vscroll .thumb {
  border: 1px solid #ababab;
  background: #fdfdfd;
}

.vscroll button {
  height: 19px;
}

.before {
  flex: 108;
}

.vscroll .thumb {
  flex: 313;
}

.vscroll .after {
  flex: 191;
}

.sheetbar {
  display: flex;
  height: 28px;
  padding-right: 24px;
  background: #f5f5f5;
}

.prev, .next {
  width: 29px;
}

.prev {
  margin-left: 8px;
}

.sheet-tab {
  width: 82px;
  height: 26px;
  margin: -1px 33px 0 29px;
  padding-bottom: 3px;
  border: 1px solid #ababab;
  border-width: 0 1px 2px;
  border-bottom-color: #217346;
  background: #fdfdfd;
  color: #217346;
  font-size: 17px;
}

.free {
  flex: 895;
}

.sheetbar .dots {
  width: 29px;
  margin-right: 2px;
  background: #fdfdfd;
}

.hscroll {
  display: flex;
  flex: 726;
  height: 19px;
  margin-top: 4px;
  background: #e6e6e6;
}

.hscroll button, .hscroll .thumb {
  border: 1px solid #ababab;
  background: #fdfdfd;
}

.hscroll button {
  width: 19px;
}

.hscroll .thumb {
  flex: 654;
  margin-left: -1px;
}

.hscroll .after {
  flex: 34;
}

/* status bar */
.status {
  display: flex;
  justify-content: flex-end;
  height: 22px;
  padding-right: 21px;
  background: #217346;
  color: #fff;
}

.view {
  width: 42px;
  padding-top: 5px;
}

.view.on {
  background: #004b1c;
}

.zoom {
  width: 14px;
  padding-top: 6px;
}

.zoom.out {
  margin-left: 4px;
}

.status input {
  appearance: none;
  width: 125px;
  height: 14px;
  margin: 7px 2px 0;
  background: linear-gradient(#fff, #fff) center / 100% 1px no-repeat;
}

.status input::-webkit-slider-thumb {
  appearance: none;
  width: 6px;
  height: 14px;
  background: #fff;
}

.percentage {
  margin-left: 12px;
  padding-top: 2px;
}

/* handle of the side panel that peeks in from the screen edge */
.dock {
  position: absolute;
  top: 525px;
  right: 0;
  width: 5px;
  height: 64px;
  border: 2px solid #777;
  border-right: 0;
  border-radius: 5px 0 0 5px;
  background: linear-gradient(#eee 50%, #f0a848 50%);
}
```
FILE: app.js
```
const titles = ["序号", "资产店", "车型", "车牌号", "排量", "车辆用途", "车辆价值", "车辆租金"];
const columns = "ABCDEFGHIJKLMNOPQRSTU";
const firstRow = 10;
const cars = [
  ["天河店", "启辰", "1.6L", 94126, 280],
  ["天河店", "启辰", "1.6L", 51819, 280],
  ["天河店", "启辰", "1.5L", 138303, 350],
  ["天河店", "启辰", "2.0L", 129680, 350],
  ["天河店", "阳光", "1.6L", 111907, 280],
  ["天河店", "西玛", "1.6L", 165408, 350],
  ["天河店", "西玛", "1.6L", 9396, 280],
  ["越秀店", "西玛", "2.0L", 143164, 350],
  ["越秀店", "西玛", "2.0L", 112491, 280],
  ["越秀店", "天籁", "1.6L", 48345, 280],
  ["越秀店", "蓝鸟", "1.6L", 23315, 280],
  ["越秀店", "楼兰", "1.6L", 32574, 280],
  ["越秀店", "逍客", "1.6L", 172488, 350],
  ["越秀店", "奇骏", "1.6L", 124912, 350],
  ["越秀店", "奇骏", "1.6L", 122232, 350],
  ["番禺店", "骐达", "2.0L", 7796, 280],
  ["番禺店", "启辰", "1.6L", 114817, 280],
  ["番禺店", "阳光", "2.0L", 41832, 280],
  ["番禺店", "西玛", "1.6L", 76691, 280],
  ["番禺店", "西玛", "1.5L", 138900, 350],
  ["番禺店", "西玛", "1.6L", 55606, 280],
  ["番禺店", "天籁", "2.0L", 144368, 350],
  ["番禺店", "蓝鸟", "2.0L", 193959, 500],
  ["番禺店", "楼兰", "1.6L", 12799, 280]
];

const head = document.querySelector("thead");
const body = document.querySelector("tbody");

function addRow(number, values, rowClass, cellClass) {
  const row = body.insertRow();
  row.className = rowClass;
  let html = `<th>${number}</th>`;
  for (let i = 0; i <= columns.length; i++) {
    const used = i < titles.length ? cellClass : "";
    html += `<td class="${used}">${values[i] ?? ""}</td>`;
  }
  row.innerHTML = html;
}

head.innerHTML = "<tr><th><svg width='16' height='16'><path d='M16 0v16H0z' fill='#dcdee0'/></svg></th>" +
  [...columns].map(c => `<th>${c}</th>`).join("") + "<th></th></tr>";

addRow(firstRow, [], "", "above");
addRow(firstRow + 1, titles, "title", "data");
cars.forEach(([shop, model, engine, value, rent], i) => {
  const plate = "粤A" + String(i + 1).padStart(3, "0");
  addRow(firstRow + 2 + i, [i + 1, shop, model, plate, engine, "易租车", value, rent], "", "data");
});
```
